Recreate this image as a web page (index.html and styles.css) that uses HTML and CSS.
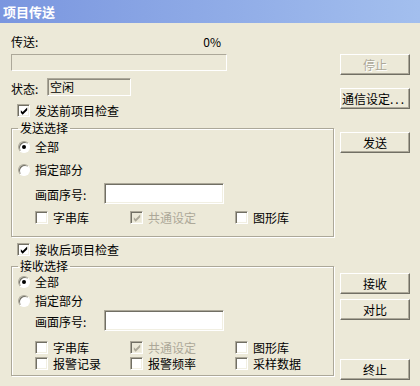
FILE: index.html
```html
<!DOCTYPE html>
<html lang="zh-CN">
<head>
    <meta charset="UTF-8">
    <title>项目传送</title>
    <link rel="stylesheet" href="styles.css">
</head>
<body>
    <div class="titlebar">项目传送</div>
    <div class="client">
        <div class="main">
            <div class="transfer-row"><span>传送:</span><span>0%</span></div>
            <div class="progress"></div>
            <div class="status-row">
                <span class="status-label">状态:</span>
                <div class="status-box">空闲</div>
            </div>
            <div class="check check-top">
                <span class="box"><svg width="11" height="11" viewBox="0 0 11 11"><path d="M2 4v3l2 2 5-5V1L4 6z" fill="#000"/></svg></span>发送前项目检查
            </div>

            <fieldset class="group group-send">
                <legend>发送选择</legend>
                <div class="radio-row first"><span class="radio"><span class="dot"></span></span>全部</div>
                <div class="radio-row second"><span class="radio"></span>指定部分</div>
                <div class="field-row">
                    <span class="field-label">画面序号:</span>
                    <div class="field-input"></div>
                </div>
                <div class="check-grid">
                    <div class="check"><span class="box"></span>字串库</div>
                    <div class="check disabled"><span class="box"><svg width="11" height="11" viewBox="0 0 11 11"><path d="M2 4v3l2 2 5-5V1L4 6z" fill="#ACA899"/></svg></span>共通设定</div>
                    <div class="check"><span class="box"></span>图形库</div>
                </div>
            </fieldset>

            <div class="check check-recv">
                <span class="box"><svg width="11" height="11" viewBox="0 0 11 11"><path d="M2 4v3l2 2 5-5V1L4 6z" fill="#000"/></svg></span>接收后项目检查
            </div>

            <fieldset class="group group-recv">
                <legend>接收选择</legend>
                <div class="radio-row first"><span class="radio"><span class="dot"></span></span>全部</div>
                <div class="radio-row second"><span class="radio"></span>指定部分</div>
                <div class="field-row">
                    <span class="field-label">画面序号:</span>
                    <div class="field-input"></div>
                </div>
                <div class="check-grid">
                    <div class="check"><span class="box"></span>字串库</div>
                    <div class="check disabled"><span class="box"><svg width="11" height="11" viewBox="0 0 11 11"><path d="M2 4v3l2 2 5-5V1L4 6z" fill="#ACA899"/></svg></span>共通设定</div>
                    <div class="check"><span class="box"></span>图形库</div>
                    <div class="check"><span class="box"></span>报警记录</div>
                    <div class="check"><span class="box"></span>报警频率</div>
                    <div class="check"><span class="box"></span>采样数据</div>
                </div>
            </fieldset>
        </div>

        <div class="side">
            <button class="btn btn-stop" disabled>停止</button>
            <button class="btn btn-comm">通信设定<span class="dots">...</span></button>
            <button class="btn btn-send">发送</button>
            <button class="btn btn-recv">接收</button>
            <button class="btn btn-cmp">对比</button>
            <button class="btn btn-end">终止</button>
        </div>
    </div>
</body>
</html>
```

FILE: styles.css
```css
body {
    margin: 0;
    background-color: #ECE9D8;
    font-family: "Noto Sans CJK SC", "DejaVu Sans", sans-serif;
    font-size: 12px;
    line-height: 14px;
    color: #000;
}

.titlebar {
    height: 23px;
    line-height: 23px;
    padding-left: 3px;
    background: linear-gradient(to right, #7A96DF, #A3BFEE);
    color: #fff;
    font-weight: bold;
    font-size: 13px;
}

.client {
    display: flex;
    padding-left: 11px;
}

.main {
    width: 323px;
}

/* transfer progress */
.transfer-row {
    display: flex;
    justify-content: space-between;
    width: 210px;
    margin-top: 12px;
    height: 14px;
}

.progress {
    width: 216px;
    height: 17px;
    margin-top: 5px;
    box-sizing: border-box;
    border: 1px solid;
    border-color: #ACA899 #fff #fff #ACA899;
}

.status-row {
    display: flex;
    align-items: center;
    margin-top: 7px;
    height: 18px;
}

.status-label {
    width: 36px;
    padding-top: 4px;
}

.status-box {
    width: 84px;
    height: 18px;
    box-sizing: border-box;
    border: 1px solid;
    border-color: #ACA899 #fff #fff #ACA899;
    box-shadow: inset 1px 1px 0 #8E8B7E;
    padding-left: 2px;
    line-height: 16px;
}

/* checkboxes */
.check {
    display: flex;
    align-items: center;
    height: 13px;
}

.box {
    width: 13px;
    height: 13px;
    box-sizing: border-box;
    margin-right: 5px;
    background: #fff;
    border: 1px solid;
    border-color: #ACA899 #fff #fff #ACA899;
    box-shadow: inset 1px 1px 0 #716F64, inset -1px -1px 0 #F1EFE2;
    display: flex;
    align-items: center;
    justify-content: center;
    flex-shrink: 0;
}

.box svg {
    display: block;
    margin: 1px 0 0 1px;
}

.check.disabled {
    color: #ACA899;
}

.check.disabled .box {
    background: #ECE9D8;
}

.check-top {
    margin-top: 8px;
    margin-left: 6px;
}

.check-recv {
    margin-top: 6px;
    margin-left: 6px;
}

/* group boxes */
.group {
    margin: 0;
    padding: 0 0 0 6px;
    min-width: 0;
    border: 1px solid #ACA899;
    box-shadow: inset 1px 1px 0 #fff, 1px 1px 0 #fff;
}

.group legend {
    margin-left: 0;
    padding: 0 2px;
    line-height: 14px;
}

.group-send {
    margin-top: 4px;
    padding-bottom: 12px;
}

.group-recv {
    margin-top: 3px;
    padding-bottom: 5px;
}

.radio-row {
    display: flex;
    align-items: center;
    height: 14px;
}

.radio {
    width: 12px;
    height: 12px;
    box-sizing: border-box;
    border-radius: 50%;
    margin-right: 5px;
    background: #fff;
    border: 1px solid;
    border-color: #ACA899 #fff #fff #ACA899;
    box-shadow: inset 1px 1px 0 #716F64;
    display: flex;
    align-items: center;
    justify-content: center;
}

.dot {
    width: 4px;
    height: 4px;
    border-radius: 50%;
    background: #000;
}

.group-send .radio-row.first { margin-top: 5px; }
.group-send .radio-row.second { margin-top: 9px; }
.group-recv .radio-row.first { margin-top: 2px; }
.group-recv .radio-row.second { margin-top: 5px; }

.field-row {
    display: flex;
    align-items: center;
    margin-left: 17px;
    height: 21px;
}

.group-send .field-row { margin-top: 6px; }
.group-recv .field-row { margin-top: 2px; }

.field-label {
    width: 69px;
    padding-top: 3px;
}

.field-input {
    width: 120px;
    height: 21px;
    box-sizing: border-box;
    background: #fff;
    border: 1px solid;
    border-color: #ACA899 #fff #fff #ACA899;
    box-shadow: inset 1px 1px 0 #716F64, inset -1px -1px 0 #F1EFE2;
}

.check-grid {
    display: grid;
    grid-template-columns: 95px 105px auto;
    row-gap: 3px;
    margin-left: 17px;
}

.group-send .check-grid { margin-top: 7px; }
.group-recv .check-grid { margin-top: 10px; }

/* right column buttons */
.side {
    display: flex;
    flex-direction: column;
    width: 70px;
    margin-left: 6px;
    padding-top: 31px;
}

.btn {
    width: 70px;
    height: 21px;
    padding: 0;
    box-sizing: border-box;
    font-family: inherit;
    font-size: 12px;
    line-height: 14px;
    color: #000;
    background: #ECE9D8;
    border: 1px solid;
    border-color: #fff #716F64 #716F64 #fff;
    box-shadow: inset -1px -1px 0 #ACA899;
}

.btn:disabled {
    color: #ACA899;
    text-shadow: 1px 1px 0 #fff;
}

.dots {
    letter-spacing: 2px;
}

.btn-comm { margin-top: 13px; text-align: left; padding-left: 1px; }
.btn-send { margin-top: 23px; }
.btn-recv { margin-top: 120px; }
.btn-cmp { margin-top: 5px; }
.btn-end { margin-top: 39px; }
```
